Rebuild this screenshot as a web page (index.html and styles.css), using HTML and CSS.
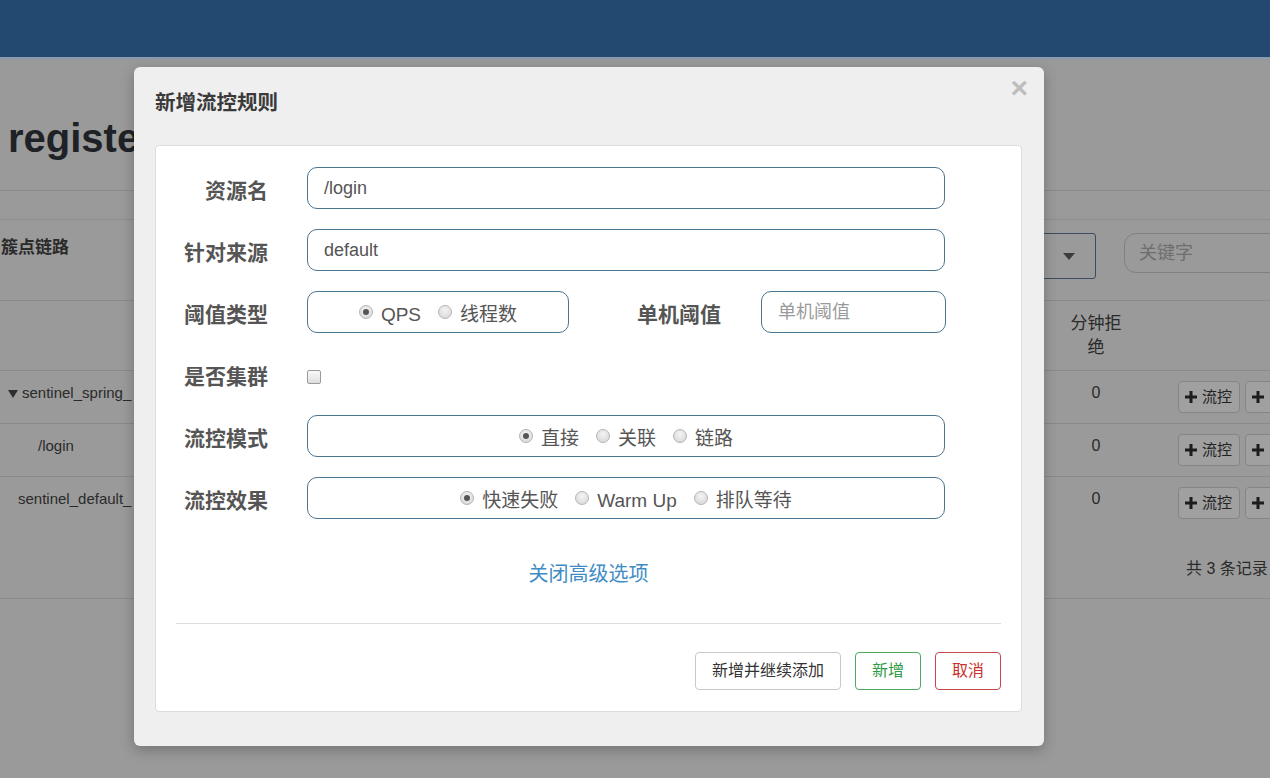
FILE: index.html
```html
<!DOCTYPE html>
<html lang="zh">
<head>
<meta charset="utf-8">
<title>新增流控规则</title>
<link rel="stylesheet" href="styles.css">
</head>
<body>
<div class="page">
  <header class="navbar"></header>
  <div class="title-bar"><h1 class="title">registe</h1></div>
  <section class="panel">
    <div class="panel-heading">
      <div class="heading-label">簇点链路</div>
      <div class="select-box"><span class="caret"></span></div>
      <div class="search-box">关键字</div>
    </div>
    <div class="trow thead">
      <div class="cell name"></div>
      <div class="cell num head">分钟拒<br>绝</div>
      <div class="cell act"></div>
    </div>
    <div class="trow">
      <div class="cell name"><span class="tri"></span>sentinel_spring_</div>
      <div class="cell num">0</div>
      <div class="cell act">
        <span class="tbtn"><svg viewBox="0 0 12 12" width="12" height="12"><path d="M4.5 0h3v4.5H12v3H7.5V12h-3V7.5H0v-3h4.5z" fill="#1c1c1c"/></svg>流控</span>
        <span class="tbtn stub"><svg viewBox="0 0 12 12" width="12" height="12"><path d="M4.5 0h3v4.5H12v3H7.5V12h-3V7.5H0v-3h4.5z" fill="#1c1c1c"/></svg></span>
      </div>
    </div>
    <div class="trow">
      <div class="cell name sub">/login</div>
      <div class="cell num">0</div>
      <div class="cell act">
        <span class="tbtn"><svg viewBox="0 0 12 12" width="12" height="12"><path d="M4.5 0h3v4.5H12v3H7.5V12h-3V7.5H0v-3h4.5z" fill="#1c1c1c"/></svg>流控</span>
        <span class="tbtn stub"><svg viewBox="0 0 12 12" width="12" height="12"><path d="M4.5 0h3v4.5H12v3H7.5V12h-3V7.5H0v-3h4.5z" fill="#1c1c1c"/></svg></span>
      </div>
    </div>
    <div class="trow last">
      <div class="cell name def">sentinel_default_</div>
      <div class="cell num">0</div>
      <div class="cell act">
        <span class="tbtn"><svg viewBox="0 0 12 12" width="12" height="12"><path d="M4.5 0h3v4.5H12v3H7.5V12h-3V7.5H0v-3h4.5z" fill="#1c1c1c"/></svg>流控</span>
        <span class="tbtn stub"><svg viewBox="0 0 12 12" width="12" height="12"><path d="M4.5 0h3v4.5H12v3H7.5V12h-3V7.5H0v-3h4.5z" fill="#1c1c1c"/></svg></span>
      </div>
    </div>
    <div class="tfoot">
      <div></div><div></div>
      <div class="count">共 3 条记录</div>
    </div>
  </section>
</div>

<div class="modal">
  <div class="modal-title">新增流控规则</div>
  <span class="close">×</span>
  <div class="modal-panel">
    <div class="frow">
      <label class="flabel">资源名</label>
      <div class="finput wide">/login</div>
    </div>
    <div class="frow">
      <label class="flabel">针对来源</label>
      <div class="finput wide">default</div>
    </div>
    <div class="frow">
      <label class="flabel">阈值类型</label>
      <div class="finput radios short">
        <span class="radio on"></span><span class="rtext">QPS</span>
        <span class="radio"></span><span class="rtext">线程数</span>
      </div>
      <label class="flabel mid">单机阈值</label>
      <div class="finput small placeholder">单机阈值</div>
    </div>
    <div class="frow">
      <label class="flabel">是否集群</label>
      <span class="checkbox"></span>
    </div>
    <div class="frow">
      <label class="flabel">流控模式</label>
      <div class="finput wide radios">
        <span class="radio on"></span><span class="rtext">直接</span>
        <span class="radio"></span><span class="rtext">关联</span>
        <span class="radio"></span><span class="rtext">链路</span>
      </div>
    </div>
    <div class="frow">
      <label class="flabel">流控效果</label>
      <div class="finput wide radios">
        <span class="radio on"></span><span class="rtext">快速失败</span>
        <span class="radio"></span><span class="rtext">Warm Up</span>
        <span class="radio"></span><span class="rtext">排队等待</span>
      </div>
    </div>
    <div class="adv-link">关闭高级选项</div>
    <div class="divider"></div>
    <div class="actions">
      <span class="btn">新增并继续添加</span>
      <span class="btn green">新增</span>
      <span class="btn red">取消</span>
    </div>
  </div>
</div>
</body>
</html>
```

FILE: styles.css
```css
html, body {
  margin: 0;
  padding: 0;
  overflow: hidden;
  background: #9a9a9a;
}
body {
  width: 1270px;
  height: 778px;
  position: relative;
  font-family: "Liberation Sans", "Noto Sans CJK SC", sans-serif;
  color: #1f1f1f;
}
.page {
  width: 1330px;
}
.navbar {
  height: 57px;
  background: #234970;
  border-bottom: 3px solid #8c9aa9;
}
.title-bar {
  height: 130px;
  border-bottom: 1px solid #8a8a8a;
  padding-left: 8px;
}
.title {
  margin: 0;
  padding-top: 56px;
  font-size: 40px;
  line-height: 44px;
  font-weight: bold;
  color: #1e2226;
}
.panel {
  margin-top: 28px;
  border-top: 1px solid #8d8d8d;
}
.panel-heading {
  display: flex;
  height: 80px;
  border-bottom: 1px solid #8a8a8a;
  padding-right: 15px;
}
.heading-label {
  flex: 1;
  padding-top: 18px;
  padding-left: 1px;
  font-size: 17px;
  line-height: 20px;
  font-weight: bold;
  color: #2a2a2a;
}
.select-box {
  width: 158px;
  height: 44px;
  margin-top: 13px;
  border: 1px solid #3b4d62;
  border-radius: 3px;
  position: relative;
}
.caret {
  position: absolute;
  right: 20px;
  top: 19px;
  width: 0;
  height: 0;
  border-left: 6px solid transparent;
  border-right: 6px solid transparent;
  border-top: 7px solid #3c3c3c;
}
.search-box {
  width: 175px;
  height: 38px;
  margin-top: 13px;
  margin-left: 28px;
  border: 1px solid #808080;
  border-radius: 12px;
  padding-left: 14px;
  font-size: 18px;
  line-height: 38px;
  color: #6e6e6e;
}
.trow {
  display: grid;
  grid-template-columns: 1060px 72px 1fr;
  height: 52px;
  border-bottom: 1px solid #8a8a8a;
  font-size: 15px;
  color: #2a2a2a;
}
.trow.thead {
  height: 69px;
}
.trow.last {
  border-bottom: none;
  height: 53px;
}
.cell {
  padding-top: 12px;
  line-height: 20px;
}
.cell.name {
  padding-left: 8px;
  display: flex;
  align-items: flex-start;
}
.cell.sub { padding-left: 38px; }
.cell.def { padding-left: 18px; }
.tri {
  width: 0;
  height: 0;
  margin-top: 7px;
  margin-right: 4px;
  border-left: 5.5px solid transparent;
  border-right: 5.5px solid transparent;
  border-top: 8px solid #2e2e2e;
}
.cell.num {
  text-align: center;
  font-size: 16px;
}
.cell.head {
  padding-top: 11px;
  line-height: 24px;
  font-size: 17px;
}
.cell.act {
  padding-top: 10px;
  padding-left: 46px;
  display: flex;
  gap: 5px;
  align-items: flex-start;
}
.tbtn {
  display: inline-flex;
  align-items: center;
  gap: 5px;
  height: 30px;
  padding: 0 7px 0 6px;
  border: 1px solid #858585;
  border-radius: 4px;
  background: #a0a0a0;
  font-size: 15px;
  color: #222;
}
.tbtn.stub {
  width: 48px;
}
.tfoot {
  display: grid;
  grid-template-columns: 1060px 72px 1fr;
  height: 68px;
  border-bottom: 1px solid #8a8a8a;
}
.count {
  padding-left: 54px;
  padding-top: 29px;
  font-size: 16px;
  line-height: 20px;
  color: #2a2a2a;
}

/* modal */
.modal {
  position: absolute;
  left: 134px;
  top: 67px;
  width: 910px;
  height: 679px;
  box-sizing: border-box;
  background: #efefef;
  border-radius: 6px;
  box-shadow: 0 4px 14px rgba(0, 0, 0, 0.25);
  font-family: "Liberation Sans", "Noto Sans CJK SC", sans-serif;
}
.modal-title {
  padding: 22px 0 0 21px;
  font-size: 20.5px;
  line-height: 28px;
  font-weight: bold;
  color: #3a3a3a;
}
.close {
  position: absolute;
  right: 16px;
  top: 1px;
  font-size: 30px;
  line-height: 40px;
  font-weight: bold;
  color: #bdbdbd;
}
.modal-panel {
  margin: 28px 22px 0 21px;
  height: 567px;
  box-sizing: border-box;
  background: #fff;
  border: 1px solid #dcdcdc;
  border-radius: 4px;
  padding: 21px 20px 21px 20px;
}
.frow {
  display: flex;
  align-items: center;
  height: 42px;
  margin-bottom: 20px;
}
.flabel {
  width: 92px;
  flex: none;
  text-align: right;
  margin-right: 39px;
  padding-top: 5px;
  font-size: 21px;
  line-height: 28px;
  font-weight: bold;
  color: #555;
}
.flabel.mid {
  width: 152px;
  margin-right: 40px;
}
.finput {
  box-sizing: border-box;
  height: 42px;
  border: 1px solid #4a7490;
  border-radius: 10px;
  padding-left: 16px;
  font-size: 18px;
  line-height: 40px;
  color: #555;
}
.finput.wide { width: 638px; }
.finput.short { width: 262px; }
.finput.small { width: 185px; }
.finput.placeholder { color: #9a9a9a; }
.finput.radios {
  display: flex;
  align-items: center;
  justify-content: center;
  padding: 5px 0 0 0;
  font-size: 19px;
}
.radio {
  box-sizing: border-box;
  width: 14px;
  height: 14px;
  border-radius: 50%;
  border: 1px solid #b5b5b5;
  background: radial-gradient(circle at 50% 35%, #f4f4f4, #d4d4d4);
  margin-right: 8px;
  margin-top: -6px;
  position: relative;
}
.radio.on::after {
  content: "";
  position: absolute;
  left: 3px;
  top: 3px;
  width: 6px;
  height: 6px;
  border-radius: 50%;
  background: #555;
}
.rtext {
  margin-right: 17px;
}
.rtext:last-child { margin-right: 0; }
.checkbox {
  box-sizing: border-box;
  width: 14px;
  height: 14px;
  margin-top: 6px;
  border: 1px solid #9a9a9a;
  border-radius: 2px;
  background: linear-gradient(#fafafa, #dedede);
}
.adv-link {
  margin-top: 41px;
  text-align: center;
  font-size: 20px;
  line-height: 28px;
  color: #3f8cc4;
}
.divider {
  margin-top: 35px;
  border-top: 1px solid #dedede;
}
.actions {
  display: flex;
  justify-content: flex-end;
  gap: 14px;
  margin-top: 28px;
}
.btn {
  box-sizing: border-box;
  height: 38px;
  padding: 0 16px;
  border: 1px solid #c8c8c8;
  border-radius: 4px;
  font-size: 16px;
  line-height: 36px;
  color: #333;
  background: #fff;
}
.btn.green {
  border-color: #4caa5e;
  color: #2f9a46;
}
.btn.red {
  border-color: #c9474a;
  color: #c9302c;
}
```
